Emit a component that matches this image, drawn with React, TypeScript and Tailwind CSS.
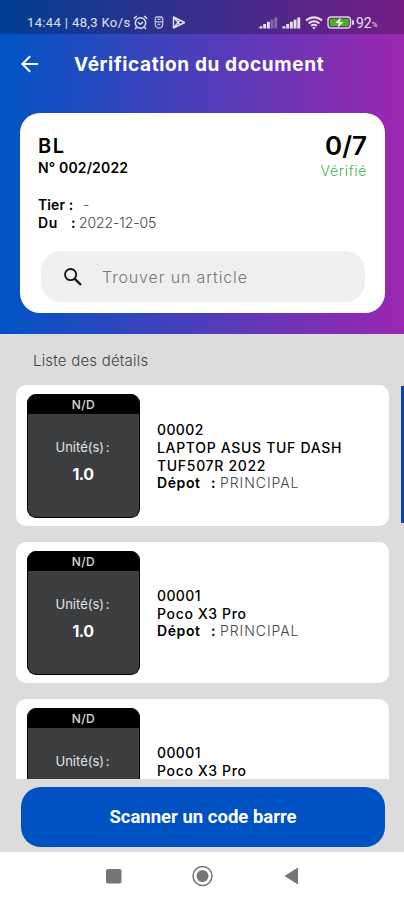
import React from 'react';

interface Article {
  id: number;
  code: string;
  lines: string[];
  units: string;
  depot: string;
}

const articles: Article[] = [
  { id: 1, code: '00002', lines: ['LAPTOP ASUS TUF DASH', 'TUF507R 2022'], units: '1.0', depot: 'PRINCIPAL' },
  { id: 2, code: '00001', lines: ['Poco X3 Pro'], units: '1.0', depot: 'PRINCIPAL' },
  { id: 3, code: '00001', lines: ['Poco X3 Pro'], units: '1.0', depot: 'PRINCIPAL' },
];

const Signal = ({ level }: { level: number }) => (
  <svg width="19" height="13" viewBox="0 0 19 13" fill="#fff">
    {[0, 1, 2, 3, 4].map(i => (
      <rect
        key={i}
        x={0.5 + i * 3.7}
        y={10.2 - i * 2.2}
        width="2.9"
        height={2.3 + i * 2.2}
        opacity={i < level ? 0.85 : 0.3}
      />
    ))}
  </svg>
);

const StatusBar = () => (
  <div className="flex h-[34px] shrink-0 items-center bg-black/25 pt-[11px] pl-[27px] font-[Roboto,sans-serif] text-[13px] leading-none text-white/85 whitespace-nowrap">
    <span className="w-[105px] tracking-[0.37px]">14:44 | 48,3 Ko/s</span>

    {/* Alarm, card and play notifications */}
    <svg className="ml-[1px]" width="15" height="15" viewBox="0 0 15 15" fill="none" stroke="#fff" strokeOpacity="0.85" strokeWidth="1.5">
      <circle cx="7.5" cy="8" r="5.2" />
      <path d="M4.8 7l2.5 2.2L10 7M.8 3.8L3.8 1M14.2 3.8L11.2 1M3.5 12.4L2 14M11.5 12.4L13 14" />
    </svg>
    <svg className="ml-[6px]" width="10" height="13" viewBox="0 0 10 13" fill="none" stroke="#fff" strokeOpacity="0.7" strokeWidth="1.3">
      <path d="M2.2 1h5.6l.9 2v5.400a3.700 3.700 0 0 1-7.4 0V3zM1.300 5.800h7.400M3.500 3.300h3M3.500 8.500h3" />
    </svg>
    <svg className="ml-[8px]" width="14" height="13" viewBox="0 0 14 13" fill="none" stroke="#fff" strokeOpacity="0.85" strokeWidth="1.4" strokeLinejoin="round">
      <path d="M1.5 1v11L12.5 6.5zM1.5 1l6.5 7.8M1.5 12L8 4.2" />
    </svg>

    <div className="ml-[73px] flex items-center">
      <Signal level={3} />
      <span className="w-[4px]" />
      <Signal level={5} />
      <svg className="ml-[4px]" width="18" height="14" viewBox="0 0 18 14" fill="none" stroke="#fff" strokeOpacity="0.85" strokeWidth="2.1">
        <path d="M1 4.6a11.5 11.5 0 0 1 16 0M3.7 7.4a7.6 7.6 0 0 1 10.6 0M6.2 10a4 4 0 0 1 5.6 0" />
        <path d="M7.3 11.2h3.4L9 13.4z" fill="#fff" stroke="none" />
      </svg>
      <svg className="ml-[4px]" width="28" height="13" viewBox="0 0 28 13">
        <rect x="1" y="1" width="22.5" height="11" rx="3" fill="none" stroke="#fff" strokeOpacity="0.8" strokeWidth="1.4" />
        <rect x="2.8" y="2.8" width="19" height="7.4" rx="1" fill="#4caf22" />
        <path d="M13.5 1.5L8.5 7h3.2l-.8 4.5L16.5 6h-3.4z" fill="#fff" />
        <rect x="25" y="4" width="2" height="5" rx="1" fill="#fff" fillOpacity="0.8" />
      </svg>
      <span className="ml-[1px] text-[14px]">92</span>
      <span className="pt-[4px] text-[8px]">%</span>
    </div>
  </div>
);

const AppBar = () => (
  <div className="flex h-[61px] items-center pl-[21px] text-white">
    <svg width="18" height="18" viewBox="0 0 18 18" fill="none" stroke="currentColor" strokeWidth="2" className="-mt-[2px]">
      <path d="M17 9H2M9.2 1.2L1.4 9l7.8 7.8" />
    </svg>
    <h1 className="mt-[1px] ml-[35px] text-[19px] font-bold tracking-[0.63px] whitespace-nowrap">
      Vérification du document
    </h1>
  </div>
);

const DocumentCard = () => (
  <div className="mt-[18px] mr-[19px] ml-[20px] flex h-[200px] flex-col rounded-[20px] bg-white px-[18px] pt-[21px] text-black">
    <div className="flex justify-between whitespace-nowrap">
      <div>
        <div className="text-[20px] leading-[24px] font-semibold tracking-[1.6px]">BL</div>
        <div className="text-[14px] leading-[19px] font-semibold tracking-[0.15px]">N° 002/2022</div>
      </div>
      <div className="-mt-[2px] flex flex-col items-end">
        <div className="text-[26px] leading-[28px] font-semibold">0/7</div>
        <div className="text-[14px] leading-[22px] font-light tracking-[0.7px] text-[#4caf50]">Vérifié</div>
      </div>
    </div>

    <div className="mt-[14px] text-[14px] leading-[18px] whitespace-nowrap">
      <div className="flex">
        <span className="w-[45px] font-semibold tracking-[0.1px]">Tier :</span>
        <span className="font-light text-[#555]">-</span>
      </div>
      <div className="flex">
        <span className="w-[33px] font-semibold tracking-[0.6px]">Du</span>
        <span className="w-[8px] font-semibold">:</span>
        <span className="font-light tracking-[-0.1px] text-[#444]">2022-12-05</span>
      </div>
    </div>

    <div className="mt-[19px] mr-[2px] ml-[3px] flex h-[51px] items-center rounded-[20px] bg-[#efefef] pl-[22px]">
      <svg width="20" height="20" viewBox="0 0 20 20" fill="none" stroke="#111" strokeWidth="1.8">
        <circle cx="7.6" cy="7.6" r="5.6" />
        <path d="M11.6 11.6l6.4 6.4" strokeWidth="2.3" />
      </svg>
      <span className="ml-[19px] text-[16px] font-light tracking-[0.86px] text-[#777]">Trouver un article</span>
    </div>
  </div>
);

const ArticleCard = ({ article }: { article: Article }) => (
  <div className="flex h-[141px] shrink-0 rounded-[10px] bg-white pt-[9px] pl-[11px]">
    <div className="flex h-[124px] w-[113px] flex-col overflow-hidden rounded-[9px] border border-t-0 border-black bg-[#3b3d3f] text-center text-white">
      <div className="h-[20px] bg-black text-[12px] leading-[21px] font-medium tracking-[0.4px] text-white/85">N/D</div>
      <div className="mt-[23px] pr-[2px] text-[13px] leading-[20px] text-white/85 [word-spacing:-2px]">Unité(s) :</div>
      <div className="mt-[7px] pr-[1px] text-[16px] leading-[20px] font-bold tracking-[-0.5px]">{article.units}</div>
    </div>
    <div className="flex h-[123px] flex-col justify-center pt-[2px] pl-[17px] text-[14px] leading-[17.6px] font-medium whitespace-nowrap text-black">
      <div className="tracking-[0.4px]">{article.code}</div>
      {article.lines.map(line => (
        <div key={line} className="tracking-[0.68px] last-of-type:tracking-[0.4px]">{line}</div>
      ))}
      <div className="flex">
        <span className="w-[54px] font-semibold tracking-[0.6px]">Dépot</span>
        <span className="w-[9px] font-semibold">:</span>
        <span className="font-light tracking-[0.95px] text-[#444]">{article.depot}</span>
      </div>
    </div>
  </div>
);

const NavigationBar = () => (
  <div className="flex h-[48px] shrink-0 items-center justify-center bg-white">
    <svg width="404" height="48" viewBox="0 0 404 48" fill="#757575">
      <rect x="106" y="17" width="15.5" height="14.5" rx="2" />
      <circle cx="202.5" cy="24" r="9.5" fill="none" stroke="#757575" strokeWidth="1.5" />
      <circle cx="202.5" cy="24" r="6" />
      <path d="M298 15.5v17L284.5 24z" />
    </svg>
  </div>
);

const App = () => {
  return (
    <div className="flex h-[900px] w-[404px] flex-col overflow-hidden bg-[#dcdcdc] font-[Inter,sans-serif]">
      <header className="h-[334px] shrink-0 bg-linear-to-r/srgb from-[#0054c4] to-[#9c27b0]">
        <StatusBar />
        <AppBar />
        <DocumentCard />
      </header>

      <main className="flex h-[445px] shrink-0 flex-col overflow-hidden">
        <h2 className="h-[51px] shrink-0 pl-[33px] text-[15px] leading-[53px] font-light tracking-[0.2px] text-[#444]">
          Liste des détails
        </h2>
        <div className="flex">
          <div className="ml-[16px] flex w-[373px] flex-col gap-[16px]">
            {articles.map(article => (
              <ArticleCard key={article.id} article={article} />
            ))}
          </div>
          {/* Edge of the next page */}
          <div className="mt-[1px] ml-auto h-[137px] w-[3px] bg-[#0b43b4]" />
        </div>
      </main>

      <div className="h-[73px] shrink-0 pt-[8px] pr-[19px] pl-[21px]">
        <button className="h-[60px] w-full rounded-[20px] bg-[#0052c2] pt-[2px] font-[Roboto,sans-serif] text-[18.5px] font-bold text-white">
          Scanner un code barre
        </button>
      </div>

      <NavigationBar />
    </div>
  );
};

export default App;
